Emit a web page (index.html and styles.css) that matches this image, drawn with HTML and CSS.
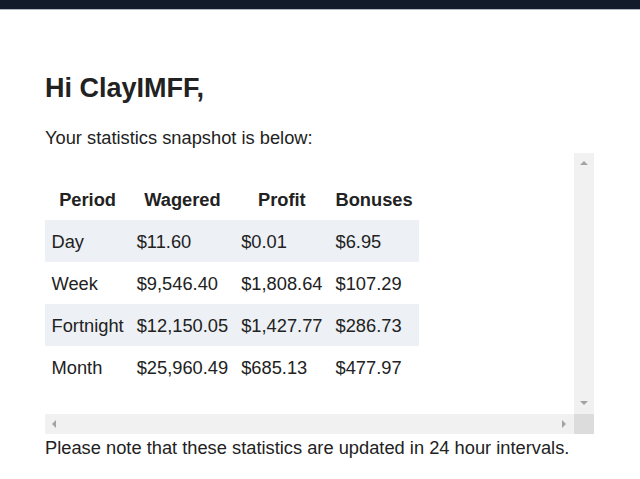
FILE: index.html
```html
<!DOCTYPE html>
<html lang="en">
<head>
<meta charset="utf-8">
<title>Statistics snapshot</title>
<link rel="stylesheet" href="styles.css">
</head>
<body>
<div class="topbar"></div>
<main class="content">
  <h1 class="greeting">Hi ClayIMFF,</h1>
  <p class="intro">Your statistics snapshot is below:</p>
  <div class="scrollbox">
    <div class="viewport">
      <table class="stats">
        <thead>
          <tr><th>Period</th><th>Wagered</th><th>Profit</th><th>Bonuses</th></tr>
        </thead>
        <tbody>
          <tr class="alt"><td>Day</td><td>$11.60</td><td>$0.01</td><td>$6.95</td></tr>
          <tr><td>Week</td><td>$9,546.40</td><td>$1,808.64</td><td>$107.29</td></tr>
          <tr class="alt"><td>Fortnight</td><td>$12,150.05</td><td>$1,427.77</td><td>$286.73</td></tr>
          <tr><td>Month</td><td>$25,960.49</td><td>$685.13</td><td>$477.97</td></tr>
        </tbody>
      </table>
    </div>
    <div class="vbar">
      <svg class="arrow" width="8" height="4" viewBox="0 0 8 4"><polygon points="0,4 8,4 4,0"/></svg>
      <svg class="arrow" width="8" height="4" viewBox="0 0 8 4"><polygon points="0,0 8,0 4,4"/></svg>
    </div>
    <div class="hbar">
      <svg class="arrow" width="4" height="8" viewBox="0 0 4 8"><polygon points="4,0 4,8 0,4"/></svg>
      <svg class="arrow" width="4" height="8" viewBox="0 0 4 8"><polygon points="0,0 0,8 4,4"/></svg>
    </div>
    <div class="corner"></div>
  </div>
  <p class="note">Please note that these statistics are updated in 24 hour intervals.</p>
</main>
</body>
</html>
```
FILE: styles.css
```css
html, body {
  margin: 0;
  padding: 0;
  background: #ffffff;
}

body {
  font-family: "Liberation Sans", Arial, sans-serif;
  color: #222222;
}

.topbar {
  height: 9px;
  background: #111b29;
  border-bottom: 1px solid #b5b9bf;
}

.content {
  padding: 63px 46px 0 45px;
}

.greeting {
  margin: 0;
  font-size: 27px;
  line-height: 30px;
  font-weight: bold;
}

.intro {
  margin: 24px 0 5px;
  font-size: 18.3px;
  line-height: 21px;
}

.scrollbox {
  width: 549px;
  display: grid;
  grid-template-columns: 1fr 20px;
  grid-template-rows: 261px 20px;
}

.viewport {
  padding-top: 25px;
  overflow: hidden;
}

.stats {
  border-collapse: collapse;
  border-spacing: 0;
  font-size: 18.3px;
  line-height: 21px;
}

.stats th,
.stats td {
  padding: 10.5px 6.5px;
  white-space: nowrap;
}

.stats th {
  text-align: center;
  font-weight: bold;
}

.stats td {
  text-align: left;
}

.stats tr.alt {
  background: #edf0f5;
}

.vbar {
  background: #f1f1f1;
  display: flex;
  flex-direction: column;
  justify-content: space-between;
  align-items: center;
  padding: 8px 0 9px 0;
}

.hbar {
  background: #f1f1f1;
  display: flex;
  justify-content: space-between;
  align-items: center;
  padding: 0 8px 0 7px;
}

.corner {
  background: #dcdcdc;
}

.arrow {
  display: block;
  fill: #a3a3a3;
}

.note {
  margin: 3px 0 0;
  font-size: 18.3px;
  line-height: 21px;
}
```
